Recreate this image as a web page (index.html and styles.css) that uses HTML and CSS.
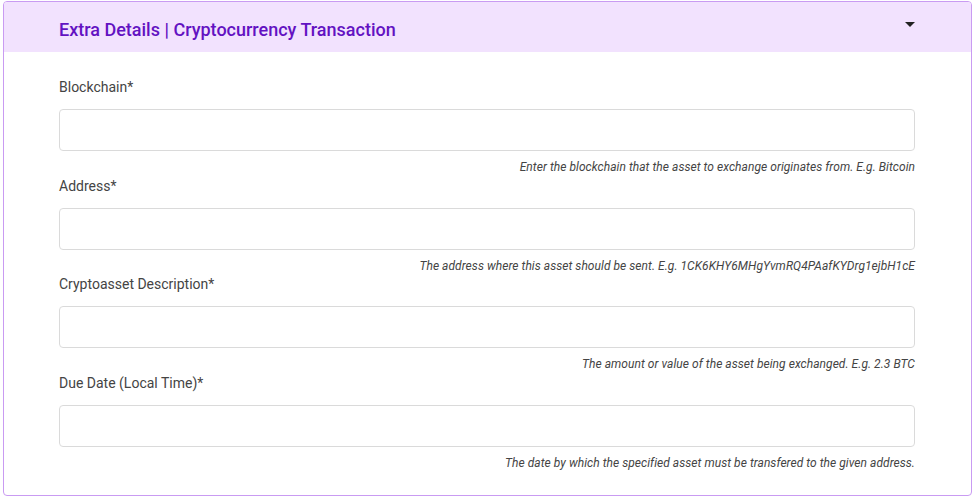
FILE: index.html
```html
<!DOCTYPE html>
<html>
<head>
<meta charset="utf-8">
<link rel="stylesheet" href="styles.css">
</head>
<body>
<div class="card">
  <div class="card-header">
    <h2 class="title">Extra Details | Cryptocurrency Transaction</h2>
    <span class="caret"></span>
  </div>
  <div class="card-body">
    <div class="field">
      <label class="label">Blockchain*</label>
      <input class="input" type="text">
      <div class="hint">Enter the blockchain that the asset to exchange originates from. E.g. Bitcoin</div>
    </div>
    <div class="field">
      <label class="label">Address*</label>
      <input class="input" type="text">
      <div class="hint">The address where this asset should be sent. E.g. 1CK6KHY6MHgYvmRQ4PAafKYDrg1ejbH1cE</div>
    </div>
    <div class="field">
      <label class="label">Cryptoasset Description*</label>
      <input class="input" type="text">
      <div class="hint">The amount or value of the asset being exchanged. E.g. 2.3 BTC</div>
    </div>
    <div class="field">
      <label class="label">Due Date (Local Time)*</label>
      <input class="input" type="text">
      <div class="hint hint-wide">The date by which the specified asset must be transfered to the given address.</div>
    </div>
  </div>
</div>
</body>
</html>
```

FILE: styles.css
```css
* { box-sizing: border-box; }
html, body { margin: 0; padding: 0; background: #fff; }
body {
  font-family: Roboto, "Liberation Sans", sans-serif;
  color: #444;
  padding: 1px 3px 0 3px;
}
.card {
  width: 969px;
  height: 495px;
  border: 1px solid #c99bf2;
  border-radius: 4px;
  overflow: hidden;
  background: #fff;
}
.card-header {
  height: 50px;
  background: #f2e2fe;
  padding: 17px 56px 0 55px;
  display: flex;
  justify-content: space-between;
  align-items: flex-start;
}
.title {
  margin: 0;
  font-size: 18px;
  line-height: 22px;
  font-weight: 500;
  color: #6312c2;
}
.caret {
  width: 0;
  height: 0;
  margin-top: 3px;
  border-left: 5px solid transparent;
  border-right: 5px solid transparent;
  border-top: 5px solid #222;
}
.card-body {
  padding: 25px 56px 0 55px;
}
.field {
  display: flex;
  flex-direction: column;
  padding-bottom: 0.5px;
}
.label {
  font-size: 14px;
  line-height: 20px;
  color: #444;
  margin-bottom: 12px;
}
.input {
  height: 42px;
  border: 1px solid #dadada;
  border-radius: 4px;
  width: 100%;
  font: inherit;
  padding: 0 12px;
  outline: none;
}
.hint {
  margin-top: 8px;
  font-size: 12px;
  line-height: 16px;
  font-style: italic;
  text-align: right;
  color: #444;
  letter-spacing: 0.05px;
}
.hint-wide {
  letter-spacing: 0.05px;
}
```
